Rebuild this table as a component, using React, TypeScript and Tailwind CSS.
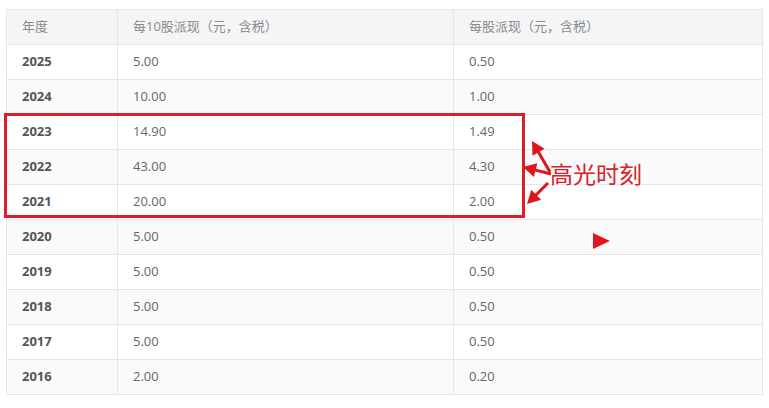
const ROWS = [
  ['2025', '5.00', '0.50'],
  ['2024', '10.00', '1.00'],
  ['2023', '14.90', '1.49'],
  ['2022', '43.00', '4.30'],
  ['2021', '20.00', '2.00'],
  ['2020', '5.00', '0.50'],
  ['2019', '5.00', '0.50'],
  ['2018', '5.00', '0.50'],
  ['2017', '5.00', '0.50'],
  ['2016', '2.00', '0.20'],
];

function Arrow({ x1, y1, x2, y2 }: { x1: number; y1: number; x2: number; y2: number }) {
  const a = Math.atan2(y2 - y1, x2 - x1);
  const L = 13;
  const W = 7;
  const bx = x2 - L * Math.cos(a);
  const by = y2 - L * Math.sin(a);
  const px = -Math.sin(a) * W;
  const py = Math.cos(a) * W;
  return (
    <g>
      <line x1={x1} y1={y1} x2={bx + 2 * Math.cos(a)} y2={by + 2 * Math.sin(a)} stroke="#e0141e" strokeWidth={3} />
      <polygon points={`${x2},${y2} ${bx + px},${by + py} ${bx - px},${by - py}`} fill="#e0141e" />
    </g>
  );
}

export default function App() {
  return (
    <div className="relative w-[769px] h-[408px] bg-white font-['Open_Sans','Noto_Sans_CJK_SC',sans-serif] text-[13px] [text-spacing-trim:space-all]">
      <div className="pt-[9px] pl-[6px]">
        <table className="w-[756px] border-collapse table-fixed">
          <colgroup>
            <col className="w-[111px]" />
            <col className="w-[336px]" />
            <col className="w-[309px]" />
          </colgroup>
          <thead>
            <tr className="h-[35px] bg-[#f4f5f7] text-[#8a8a8a]">
              <th className="border border-[#e6e6e6] text-left font-normal pl-[15px]">年度</th>
              <th className="border border-[#e6e6e6] text-left font-normal pl-[15px]">每10股派现（元，含税）</th>
              <th className="border border-[#e6e6e6] text-left font-normal pl-[15px]">每股派现（元，含税）</th>
            </tr>
          </thead>
          <tbody>
            {ROWS.map((r, i) => (
              <tr key={r[0]} className={`h-[35px] ${i % 2 === 0 ? 'bg-white' : 'bg-[#fafafa]'}`}>
                <td className="border border-[#e6e6e6] pl-[15px] font-bold text-[#555]">{r[0]}</td>
                <td className="border border-[#e6e6e6] pl-[15px] text-[#666]">{r[1]}</td>
                <td className="border border-[#e6e6e6] pl-[15px] text-[#666]">{r[2]}</td>
              </tr>
            ))}
          </tbody>
        </table>
      </div>

      {/* annotation overlay */}
      <div className="absolute left-[4px] top-[113px] w-[521px] h-[105px] border-[3px] border-[#d9202a]" />
      <svg className="absolute left-0 top-0" width={769} height={408}>
        <Arrow x1={550} y1={172} x2={532} y2={141} />
        <Arrow x1={551} y1={174} x2={523} y2={167} />
        <Arrow x1={548} y1={183} x2={527} y2={204} />
        <polygon points="593,233 593,249 610,241" fill="#e8141c" />
      </svg>
      <div className="absolute left-[550px] top-[162px] text-[23px] leading-none text-[#d9202a] font-['Noto_Sans_CJK_SC',sans-serif]">
        高光时刻
      </div>
    </div>
  );
}
